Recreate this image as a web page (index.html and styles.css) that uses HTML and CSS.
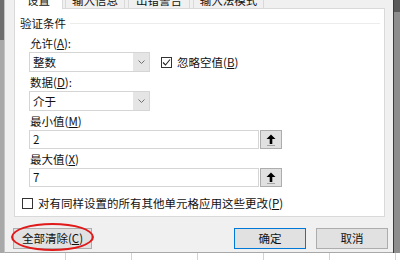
FILE: index.html
```html
<!DOCTYPE html>
<html lang="zh-CN">
<head>
<meta charset="utf-8">
<title>数据验证</title>
<link rel="stylesheet" href="styles.css">
</head>
<body>
<div class="screen">
  <div class="edge-left"></div>
  <div class="dialog">
    <div class="tabs">
      <div class="tab tab-active">设置</div>
      <div class="tab tab-2">输入信息</div>
      <div class="tab tab-3">出错警告</div>
      <div class="tab tab-4">输入法模式</div>
    </div>
    <div class="panel">
      <div class="legend"><span class="legend-text">验证条件</span><span class="legend-line"></span></div>
      <div class="label label-first">允许(<u>A</u>):</div>
      <div class="row">
        <div class="combo">
          <span class="combo-text">整数</span>
          <span class="combo-btn"><svg width="7" height="4" viewBox="0 0 7 4"><polyline points="0.5,0.5 3.5,3.5 6.5,0.5" fill="none" stroke="#707070" stroke-width="1"/></svg></span>
        </div>
        <div class="check check-ignore">
          <span class="box"><svg width="9" height="9" viewBox="0 0 9 9"><polyline points="1,4.5 3.5,7 8,1.5" fill="none" stroke="#222" stroke-width="1.1"/></svg></span>
          <span>忽略空值(<u>B</u>)</span>
        </div>
      </div>
      <div class="label">数据(<u>D</u>):</div>
      <div class="row">
        <div class="combo">
          <span class="combo-text">介于</span>
          <span class="combo-btn"><svg width="7" height="4" viewBox="0 0 7 4"><polyline points="0.5,0.5 3.5,3.5 6.5,0.5" fill="none" stroke="#707070" stroke-width="1"/></svg></span>
        </div>
      </div>
      <div class="label">最小值(<u>M</u>)</div>
      <div class="row">
        <div class="field">2</div>
        <div class="ref-btn"><svg width="10" height="12" viewBox="0 0 10 12"><path d="M5 0.5 L9.5 5 L6.3 5 L6.3 10 L3.7 10 L3.7 5 L0.5 5 Z" fill="#000"/><line x1="1.5" y1="11.5" x2="8.5" y2="11.5" stroke="#666" stroke-width="1" stroke-dasharray="1 1"/></svg></div>
      </div>
      <div class="label">最大值(<u>X</u>)</div>
      <div class="row">
        <div class="field">7</div>
        <div class="ref-btn"><svg width="10" height="12" viewBox="0 0 10 12"><path d="M5 0.5 L9.5 5 L6.3 5 L6.3 10 L3.7 10 L3.7 5 L0.5 5 Z" fill="#000"/><line x1="1.5" y1="11.5" x2="8.5" y2="11.5" stroke="#666" stroke-width="1" stroke-dasharray="1 1"/></svg></div>
      </div>
      <div class="check check-apply">
        <span class="box"></span>
        <span>对有同样设置的所有其他单元格应用这些更改(<u>P</u>)</span>
      </div>
    </div>
    <div class="footer">
      <div class="btn btn-clear">全部清除(<u>C</u>)</div>
      <div class="spacer"></div>
      <div class="btn btn-default">确定</div>
      <div class="btn">取消</div>
    </div>
  </div>
  <div class="edge-right"></div>
</div>
<div class="sheet">
  <span class="cell"></span><span class="cell"></span><span class="cell"></span><span class="cell"></span><span class="cell"></span><span class="cell"></span>
</div>
</body>
</html>
```

FILE: styles.css
```css
* { box-sizing: border-box; }
html, body { margin: 0; padding: 0; }
body {
  width: 400px;
  height: 260px;
  overflow: hidden;
  background: #fff;
  font-family: "Noto Sans CJK SC", "Noto Sans", sans-serif;
  font-size: 11.5px;
  color: #111;
}
u { text-decoration: underline; text-underline-offset: 1px; }

.screen { display: flex; height: 253px; }
.edge-left { width: 4px; background: linear-gradient(#6e6e6e 0, #6e6e6e 40px, #a8a8a8 40px); }
.edge-right { width: 7px; border-left: 1px solid #3c3c3c; background: linear-gradient(#5a5a5a 0, #5a5a5a 12px, #8e8e8e 12px); }

.dialog {
  width: 389px;
  background: #f0f0f0;
  border-left: 1px solid #c4c4c4;
  border-bottom: 1px solid #a8a8a8;
  display: flex;
  flex-direction: column;
}

.tabs {
  display: flex;
  height: 20px;
  margin-top: -12px;
  padding-left: 9px;
  position: relative;
  z-index: 1;
}
.tab {
  height: 20px;
  border: 1px solid #d9d9d9;
  border-bottom: none;
  background: #f0f0f0;
  line-height: 22px;
  text-align: center;
  white-space: nowrap;
  overflow: hidden;
}
.tab-active { width: 49px; background: #fff; height: 21px; margin-right: 2px; }
.tab-2 { width: 60px; margin-right: 3px; }
.tab-3 { width: 62px; margin-right: 3px; }
.tab-4 { width: 71px; }

.panel {
  margin-left: 9px;
  width: 371px;
  height: 209px;
  background: #fff;
  border: 1px solid #d9d9d9;
  display: flex;
  flex-direction: column;
}

.legend {
  display: flex;
  align-items: center;
  height: 14px;
  line-height: 14px;
  margin-top: 7px;
  padding-left: 5px;
  padding-right: 4px;
}
.legend-text { padding-right: 4px; }
.legend-line { flex: 1; height: 1px; background: #ececec; }

.label {
  height: 14px;
  line-height: 14px;
  margin-top: 3px;
  padding-left: 15px;
}
.label-first { margin-top: 6px; }

.row {
  display: flex;
  align-items: center;
  margin-top: 2px;
  padding-left: 14px;
}

.combo {
  width: 121px;
  height: 20px;
  border: 1px solid #d5d5d5;
  background: #fff;
  display: flex;
}
.combo-text { flex: 1; line-height: 18px; padding-left: 3px; }
.combo-btn {
  width: 16px;
  background: #e5e5e5;
  display: flex;
  align-items: center;
  justify-content: center;
}

.check { display: flex; align-items: center; height: 14px; line-height: 14px; }
.box {
  width: 11px;
  height: 11px;
  border: 1px solid #333;
  background: #fff;
  display: flex;
  align-items: center;
  justify-content: center;
  margin-right: 5px;
}
.check-ignore { margin-left: 11px; }
.check-apply { margin-top: 9px; padding-left: 7px; }

.field {
  width: 230px;
  height: 19px;
  border: 1px solid #d5d5d5;
  background: #fff;
  line-height: 17px;
  padding-left: 3px;
}
.ref-btn {
  width: 22px;
  height: 19px;
  margin-left: 1px;
  background: #e1e1e1;
  border: 1px solid #adadad;
  display: flex;
  align-items: center;
  justify-content: center;
}

.footer {
  display: flex;
  margin-top: 11px;
  padding-left: 8px;
  padding-right: 5px;
}
.spacer { flex: 1; }
.btn {
  width: 72px;
  height: 21px;
  background: #e1e1e1;
  border: 1px solid #adadad;
  line-height: 19px;
  text-align: center;
  color: #111;
}
.btn + .btn { margin-left: 10px; }
.btn-default { border-color: #0078d7; }
.btn-clear { width: 79px; position: relative; }
.btn-clear::after {
  content: "";
  position: absolute;
  left: -3px;
  right: -3px;
  top: -6px;
  bottom: -3px;
  border: 2.5px solid #e01a1a;
  border-radius: 50%;
}

.sheet {
  height: 7px;
  display: flex;
  background: #fff;
}
.cell { width: 66px; border-right: 1px solid #d4d4d4; }
```
